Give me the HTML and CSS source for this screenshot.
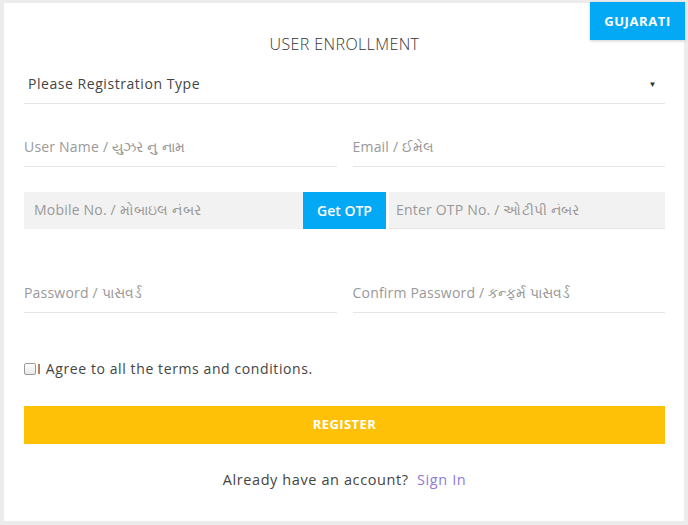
FILE: index.html
```html
<!DOCTYPE html>
<html>
<head>
<meta charset="utf-8">
<link rel="stylesheet" href="styles.css">
</head>
<body>
<div class="card">
  <button class="lang">GUJARATI</button>
  <h1 class="title">USER ENROLLMENT</h1>
  <div class="select">
    <span>Please Registration Type</span>
    <span class="arrow">&#9660;</span>
  </div>
  <div class="row">
    <div class="field"><span class="ph">User Name / યુઝર નુ નામ</span></div>
    <div class="field"><span class="ph">Email / ઈમેલ</span></div>
  </div>
  <div class="otp-row">
    <div class="otp-field mobile"><span class="ph">Mobile No. / મોબાઇલ નંબર</span></div>
    <button class="otp-btn">Get OTP</button>
    <div class="otp-field code"><span class="ph">Enter OTP No. / ઓટીપી નંબર</span></div>
  </div>
  <div class="row pw">
    <div class="field"><span class="ph">Password / પાસવર્ડ</span></div>
    <div class="field"><span class="ph">Confirm Password / કન્ફર્મ પાસવર્ડ</span></div>
  </div>
  <label class="agree"><span class="box"></span>I Agree to all the terms and conditions.</label>
  <button class="register">REGISTER</button>
  <p class="signin">Already have an account? <a class="link">Sign In</a></p>
</div>
</body>
</html>
```
FILE: styles.css
```css
html, body {
  margin: 0;
  padding: 0;
}
body {
  background: #ececec;
  width: 688px;
  height: 525px;
  padding: 3px 4px 4px 4px;
  box-sizing: border-box;
  font-family: "Open Sans", "Noto Sans", sans-serif;
}
.card {
  position: relative;
  background: #fff;
  height: 518px;
  padding: 0 19px 0 20px;
  box-sizing: border-box;
}
.lang {
  position: absolute;
  top: -1px;
  right: -1px;
  width: 95px;
  height: 38px;
  background: #03a9f4;
  border: 0;
  color: #fff;
  font-family: inherit;
  font-weight: 700;
  font-size: 13px;
  letter-spacing: 0.6px;
  box-shadow: 0 1px 3px rgba(0,0,0,0.2);
  padding: 0;
}
.title {
  margin: 0;
  padding-top: 31px;
  text-align: center;
  font-size: 16px;
  font-weight: 300;
  color: #333;
  line-height: 20px;
  letter-spacing: 0.4px;
}
.select {
  margin-top: 12px;
  height: 38px;
  border-bottom: 1px solid #e6e6e6;
  display: flex;
  justify-content: space-between;
  align-items: center;
  padding: 0 8px 3px 4px;
  box-sizing: border-box;
  font-size: 14px;
  letter-spacing: 0.55px;
  color: #444;
}
.arrow {
  font-size: 8px;
  color: #333;
}
.row {
  display: flex;
  gap: 16px;
  margin-top: 27px;
}
.field {
  flex: 1;
  height: 36px;
  border-bottom: 1px solid #e6e6e6;
  display: flex;
  align-items: center;
  padding-bottom: 4px;
  box-sizing: border-box;
}
.ph {
  font-size: 14px;
  color: #999;
  letter-spacing: 0.2px;
}
.otp-row {
  display: flex;
  margin-top: 25px;
  height: 37px;
}
.otp-field {
  background: #f2f2f2;
  display: flex;
  align-items: center;
  padding-bottom: 2px;
  box-sizing: border-box;
}
.mobile {
  width: 279px;
  padding-left: 10px;
}
.otp-btn {
  width: 83px;
  background: #03a9f4;
  border: 0;
  color: #fff;
  font-family: inherit;
  font-size: 14px;
  font-weight: 600;
  padding: 0 0 1px 0;
}
.code {
  flex: 1;
  margin-left: 3px;
  padding-left: 7px;
  border-bottom: 1px solid #e6e6e6;
}
.row.pw {
  margin-top: 48px;
}
.agree {
  display: flex;
  align-items: center;
  margin-top: 46px;
  font-size: 14px;
  letter-spacing: 0.6px;
  color: #444;
}
.box {
  width: 10px;
  height: 10px;
  border: 1px solid #999;
  border-radius: 2px;
  background: linear-gradient(#fff, #e8e8e8);
  margin-right: 1px;
}
.register {
  display: block;
  width: 100%;
  margin-top: 28px;
  height: 38px;
  background: #ffc107;
  border: 0;
  color: #fff;
  font-family: inherit;
  font-weight: 700;
  font-size: 13px;
  letter-spacing: 0.4px;
  padding: 0 0 2px 0;
}
.signin {
  margin: 26px 0 0 0;
  text-align: center;
  font-size: 14.5px;
  letter-spacing: 0.6px;
  color: #444;
}
.link {
  color: #8f7ad8;
  margin-left: 4px;
}
```
